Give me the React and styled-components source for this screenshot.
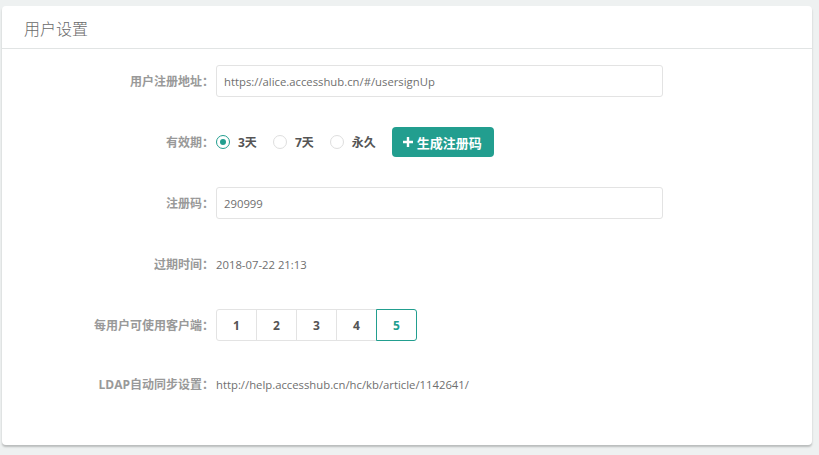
import React, { useState } from 'react';
import styled, { createGlobalStyle } from 'styled-components';

const GlobalStyle = createGlobalStyle`
  html, body {
    margin: 0;
    padding: 0;
    background: #eef1f1;
    font-family: "Open Sans", "Noto Sans CJK SC", sans-serif;
  }
`;

const Page = styled.div`
  padding: 6px 7px 10px 2px;
`;

const Card = styled.div`
  background: #fff;
  border-radius: 4px;
  box-shadow: 0 2px 2px rgba(0, 0, 0, 0.22);
  height: 439px;
  box-sizing: border-box;
`;

const CardHeader = styled.div`
  height: 43px;
  border-bottom: 1px solid #e1e4e4;
  display: flex;
  align-items: center;
  padding-left: 22px;
  padding-top: 1px;
  box-sizing: border-box;
  font-size: 16px;
  color: #6a6a6a;
  font-family: "Noto Sans CJK SC", sans-serif;
  font-weight: 300;
`;

const Form = styled.div`
  padding-top: 16px;
  display: flex;
  flex-direction: column;
  gap: 29px;
`;

const Row = styled.div`
  display: flex;
  align-items: center;
  min-height: ${(p) => (p.short ? '28px' : '32px')};
`;

const Label = styled.div`
  width: 214px;
  box-sizing: border-box;
  padding-right: 2px;
  text-align: right;
  font-size: 12px;
  font-weight: bold;
  color: #999;
  font-family: "Open Sans", "Noto Sans CJK SC", sans-serif;
`;

const Input = styled.input`
  width: 447px;
  height: 32px;
  box-sizing: border-box;
  border: 1px solid #e3e3e3;
  border-radius: 3px;
  padding: 0 7px;
  font-size: 11.3px;
  color: #6f6f6f;
  font-family: "Open Sans", "Noto Sans CJK SC", sans-serif;
  outline: none;
`;

const Value = styled.span`
  font-size: 11.3px;
  color: #6f6f6f;
`;

const RadioGroup = styled.div`
  display: flex;
  align-items: center;
`;

const RadioItem = styled.label`
  display: flex;
  align-items: center;
  margin-right: 16px;
  cursor: pointer;
  font-size: 12px;
  font-weight: bold;
  color: #555;
`;

const Circle = styled.span`
  width: 14px;
  height: 14px;
  box-sizing: border-box;
  border-radius: 50%;
  border: 1px solid ${(p) => (p.checked ? '#229e8f' : '#dedede')};
  margin-right: 8px;
  display: flex;
  align-items: center;
  justify-content: center;
  &::after {
    content: '';
    width: 6px;
    height: 6px;
    border-radius: 50%;
    background: ${(p) => (p.checked ? '#229e8f' : 'transparent')};
  }
`;

const PrimaryButton = styled.button`
  height: 30px;
  padding: 0 12px 0 11px;
  border: none;
  border-radius: 4px;
  background: #229e8f;
  color: #fff;
  font-size: 13px;
  font-weight: bold;
  font-family: "Open Sans", "Noto Sans CJK SC", sans-serif;
  display: flex;
  align-items: center;
  gap: 4px;
  cursor: pointer;
`;

const Segments = styled.div`
  display: flex;
`;

const Segment = styled.button`
  width: 41px;
  height: 32px;
  box-sizing: border-box;
  background: #fff;
  border: 1px solid ${(p) => (p.active ? '#229e8f' : '#e3e3e3')};
  margin-left: -1px;
  position: relative;
  z-index: ${(p) => (p.active ? 1 : 0)};
  color: ${(p) => (p.active ? '#229e8f' : '#555')};
  font-size: 12px;
  font-weight: bold;
  font-family: "Open Sans", sans-serif;
  cursor: pointer;
  &:first-child {
    margin-left: 0;
    border-radius: 3px 0 0 3px;
  }
  &:last-child {
    border-radius: 0 3px 3px 0;
  }
`;

const PlusIcon = () => (
  <svg width="10" height="10" viewBox="0 0 10 10">
    <path d="M3.8 0h2.4v3.8H10v2.4H6.2V10H3.8V6.2H0V3.8h3.8z" fill="#fff" />
  </svg>
);

export default function App() {
  const [period, setPeriod] = useState('3');
  const [clients, setClients] = useState(5);
  const periods = [
    { key: '3', text: '3天' },
    { key: '7', text: '7天' },
    { key: 'f', text: '永久' },
  ];

  return (
    <Page>
      <GlobalStyle />
      <Card>
        <CardHeader>用户设置</CardHeader>
        <Form>
          <Row>
            <Label>用户注册地址：</Label>
            <Input readOnly value="https://alice.accesshub.cn/#/usersignUp" />
          </Row>
          <Row>
            <Label>有效期：</Label>
            <RadioGroup>
              {periods.map((p) => (
                <RadioItem key={p.key} onClick={() => setPeriod(p.key)}>
                  <Circle checked={period === p.key} />
                  {p.text}
                </RadioItem>
              ))}
              <PrimaryButton>
                <PlusIcon />
                生成注册码
              </PrimaryButton>
            </RadioGroup>
          </Row>
          <Row>
            <Label>注册码：</Label>
            <Input readOnly value="290999" />
          </Row>
          <Row>
            <Label>过期时间：</Label>
            <Value>2018-07-22 21:13</Value>
          </Row>
          <Row>
            <Label>每用户可使用客户端：</Label>
            <Segments>
              {[1, 2, 3, 4, 5].map((n) => (
                <Segment key={n} active={clients === n} onClick={() => setClients(n)}>
                  {n}
                </Segment>
              ))}
            </Segments>
          </Row>
          <Row short>
            <Label>LDAP自动同步设置：</Label>
            <Value>http://help.accesshub.cn/hc/kb/article/1142641/</Value>
          </Row>
        </Form>
      </Card>
    </Page>
  );
}
